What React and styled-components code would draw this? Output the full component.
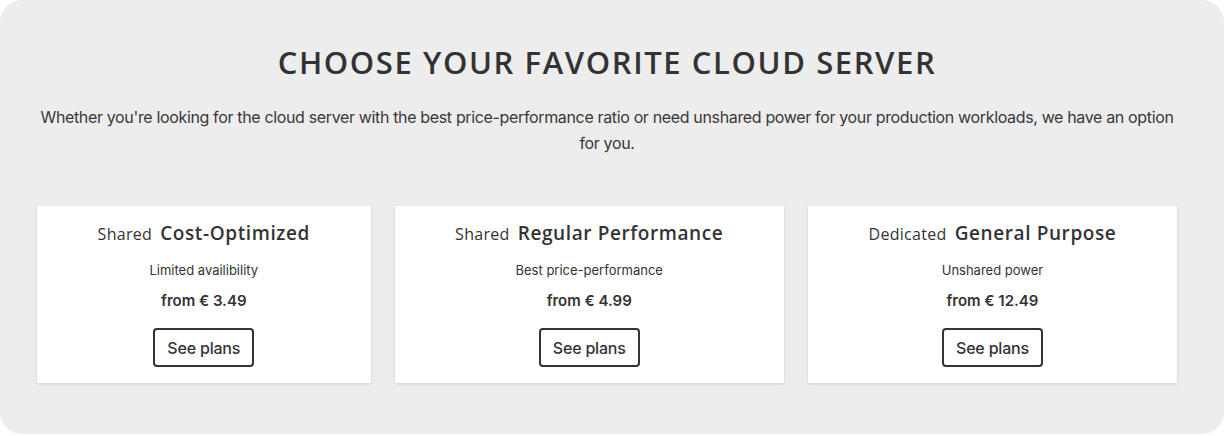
import React from 'react'
import styled, { createGlobalStyle } from 'styled-components'

const GlobalStyle = createGlobalStyle`
  body {
    margin: 0;
    background: #ffffff;
    font-family: "Inter", "Liberation Sans", sans-serif;
  }
`

const plans = [
  { kind: 'Shared', name: 'Cost-Optimized', note: 'Limited availibility', price: '3.49' },
  { kind: 'Shared', name: 'Regular Performance', note: 'Best price-performance', price: '4.99' },
  { kind: 'Dedicated', name: 'General Purpose', note: 'Unshared power', price: '12.49' },
]

function App() {
  return (
    <>
      <GlobalStyle />
      <Section>
        <Title>Choose your favorite cloud server</Title>
        <Lead>
          Whether you're looking for the cloud server with the best price-performance ratio or need unshared
          power for your production workloads, we have an option for you.
        </Lead>
        <Cards>
          {plans.map((p) => (
            <Card key={p.name}>
              <CardTitle>
                <Kind>{p.kind}</Kind>
                <Name>{p.name}</Name>
              </CardTitle>
              <Note>{p.note}</Note>
              <Price>from € {p.price}</Price>
              <PlansButton>See plans</PlansButton>
            </Card>
          ))}
        </Cards>
      </Section>
    </>
  )
}

const Section = styled.section`
  box-sizing: border-box;
  width: 1224px;
  height: 434px;
  background: #ededed;
  border-radius: 22px;
  padding: 44px 47px 0 37px;
  color: #333;
`

const Title = styled.h2`
  margin: 0;
  text-align: center;
  text-transform: uppercase;
  font-family: "Open Sans", sans-serif;
  font-weight: 600;
  font-size: 31px;
  line-height: 36px;
  letter-spacing: 1.6px;
  color: #333;
`

const Lead = styled.p`
  margin: 24px 0 0;
  text-align: center;
  font-size: 16px;
  line-height: 26px;
  letter-spacing: -0.35px;
  color: #383838;
`

const Cards = styled.div`
  display: flex;
  gap: 24px;
  margin-top: 50px;
`

const Card = styled.div`
  flex: 1 1 auto;
  display: flex;
  flex-direction: column;
  align-items: center;
  background: #fff;
  padding: 14px 0 16px;
  box-shadow: 0 1px 3px rgba(0, 0, 0, 0.12);
`

const CardTitle = styled.div`
  display: flex;
  align-items: baseline;
  gap: 8px;
  white-space: nowrap;
  line-height: 26px;
`

const Kind = styled.span`
  font-family: "Open Sans", sans-serif;
  font-size: 16px;
  font-weight: 400;
  letter-spacing: 0.3px;
  color: #333;
`

const Name = styled.span`
  font-family: "Open Sans", sans-serif;
  font-size: 19px;
  font-weight: 600;
  letter-spacing: 0.6px;
  color: #333;
`

const Note = styled.div`
  margin-top: 14px;
  font-size: 13px;
  line-height: 18px;
  color: #333;
`

const Price = styled.div`
  margin-top: 12px;
  font-size: 15px;
  font-weight: 600;
  line-height: 20px;
  color: #333;
`

const PlansButton = styled.button`
  margin-top: 17px;
  box-sizing: border-box;
  height: 39px;
  padding: 0 12px;
  background: #fff;
  border: 2px solid #333;
  border-radius: 4px;
  font-family: "Inter", sans-serif;
  font-size: 16px;
  font-weight: 500;
  letter-spacing: -0.2px;
  color: #333;
  cursor: pointer;
`

export default App
